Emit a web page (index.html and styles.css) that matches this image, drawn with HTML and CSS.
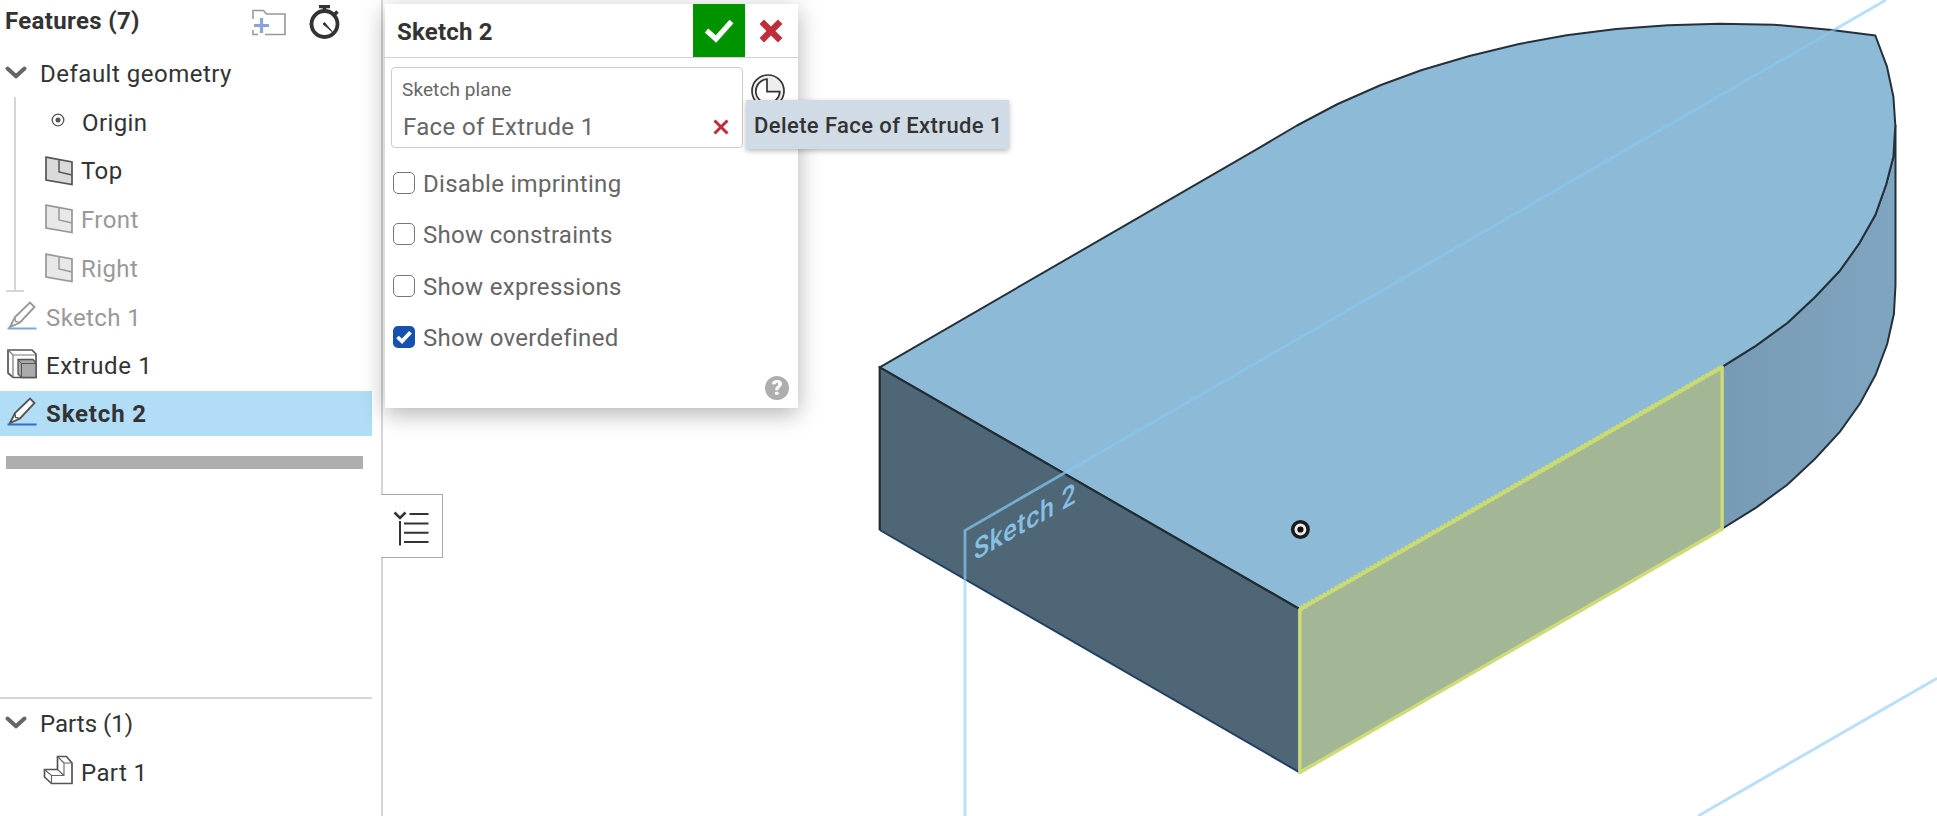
FILE: index.html
```html
<!DOCTYPE html>
<html lang="en">
<head>
<meta charset="utf-8">
<title>Sketch 2</title>
<link rel="stylesheet" href="styles.css">
</head>
<body>
<svg class="defs" width="0" height="0">
  <symbol id="plane" viewBox="0 0 28 30">
    <path d="M1 1.2 27 6v22.6L1 24Z" class="plane-fill"/>
    <path d="M14 3.600V16l13 3" class="plane-line"/>
  </symbol>
  <symbol id="pencil" viewBox="0 0 30 29">
    <path d="M3 26 8 16 23 1.500 27.500 6 13 21.500Z" class="pencil-body"/>
    <path d="M8 16.500 8.500 20.500 13 21.300" class="pencil-line"/>
    <path d="M0.500 27.500H29.500" class="pencil-base"/>
  </symbol>
  <symbol id="chevron" viewBox="0 0 22 14">
    <path d="M2.500 2.500 11 10.300 19.500 2.500" class="chevron-line"/>
  </symbol>
</svg>
<div class="app">
  <aside class="sidebar">
    <header class="side-head">
      <h1 class="title">Features (7)</h1>
      <svg class="folder" width="34" height="28" viewBox="0 0 34 28">
        <path d="M1 10V1.500H11.500L14.500 5H33V25.500H13M6 25.500H1V21" fill="none" stroke="#999" stroke-width="1.600"/>
        <path d="M9.500 9V24M2 16.500H17" stroke="#87a5dc" stroke-width="3.200"/>
      </svg>
      <svg class="timer" width="32" height="36" viewBox="0 0 32 36">
        <circle cx="15.500" cy="19" r="13" fill="none" stroke="#333" stroke-width="3.800"/>
        <path d="M10 1.500H21M15.500 1V6M25 10 28.500 6.500" fill="none" stroke="#333" stroke-width="3.600"/>
        <path d="M14 19 15.500 17.500 23 26.500Z" fill="#333" stroke="#333"/>
      </svg>
    </header>
    <div class="row group"><svg class="chev" width="22" height="14"><use href="#chevron"/></svg><span class="t geo">Default geometry</span></div>
    <div class="children">
      <div class="row child"><svg class="origin" width="14" height="14" viewBox="0 0 14 14"><circle cx="7" cy="7" r="5.800" fill="none" stroke="#555" stroke-width="1.300"/><circle cx="7" cy="7" r="2.500" fill="#555"/></svg><span class="t">Origin</span></div>
      <div class="row child"><svg class="ico" width="28" height="30"><use href="#plane"/></svg><span class="t">Top</span></div>
      <div class="row child dim"><svg class="ico" width="28" height="30"><use href="#plane"/></svg><span class="t">Front</span></div>
      <div class="row child dim"><svg class="ico" width="28" height="30"><use href="#plane"/></svg><span class="t">Right</span></div>
    </div>
    <div class="row item dim"><svg class="pencil" width="30" height="29"><use href="#pencil"/></svg><span class="t">Sketch 1</span></div>
    <div class="row item">
      <svg class="pencil" width="30" height="30" viewBox="0 0 30 30">
        <path d="M1 1H25L29 5V28.500H6L1 24Z" fill="#fff" stroke="#555" stroke-width="1.700"/>
        <path d="M1 1 6 6H29M6 6V28.500" fill="none" stroke="#777" stroke-width="1.200"/>
        <path d="M11 10.500H26L29 14V28.500H14.500L11 25Z" fill="#aaa" stroke="#555" stroke-width="1.300"/>
        <path d="M11 10.500 14.500 14.500H29M14.500 14.500V28" fill="none" stroke="#555"/>
      </svg><span class="t wide">Extrude 1</span></div>
    <div class="row item selected"><svg class="pencil" width="30" height="29"><use href="#pencil"/></svg><span class="t">Sketch 2</span></div>
    <div class="rollback"></div>
    <section class="parts">
      <div class="row group"><svg class="chev" width="22" height="14"><use href="#chevron"/></svg><span class="t tight">Parts (1)</span></div>
      <div class="row child">
        <svg class="ico part" width="30" height="30" viewBox="0 0 30 30">
          <path d="M1.500 14.500H14.500V1.500H23.500L29 8V28.500H8.500L1.500 22Z" fill="#fff" stroke="#555" stroke-width="1.700"/>
          <path d="M1.500 14.500 8.500 20.500H21V8H29M14.500 1.500 21 8M14.500 14.500 21 20.500M8.500 20.500V28" fill="none" stroke="#666" stroke-width="1.100"/>
        </svg><span class="t">Part 1</span></div>
    </section>
  </aside>
  <main class="canvas">
    <svg class="model" width="1554" height="816" viewBox="383 0 1554 816">
      <defs>
        <linearGradient id="side" x1="1722" x2="1896" y1="0" y2="0" gradientUnits="userSpaceOnUse">
          <stop offset="0" stop-color="#779bb5"/><stop offset=".5" stop-color="#7ca0ba"/><stop offset="1" stop-color="#7fa5c0"/>
        </linearGradient>
      </defs>
      <path fill="url(#side)" stroke="#25313a" stroke-width="2" d="M1722.500 366.700 1756.500 345.300 1787.600 322.700 1815.300 296.700 1839.900 270.700 1859.300 243.300 1875.300 215 1886 185 1893.400 156.700 1895.500 125V285L1893.900 314 1887.200 344 1875.500 375 1860 403.500 1840 431.700 1815.300 458.500 1787.600 484.500 1756.500 507.300 1722.500 528.500Z"/>
      <path fill="#8dbad6" stroke="#25313a" stroke-width="2" stroke-linejoin="round" d="M879.700 367.300 1260 147.300 1297 125.500 1337.700 104 1380.900 85 1421.900 70 1469.400 56 1519 44 1566.600 35.300 1616.200 29 1668 25.300 1719.800 23.700 1773.800 24.700 1832 30 1875.300 35.500 1887 66.700 1893.400 96.700 1895.300 125 1893.400 156.700 1886 185 1875.300 215 1859.300 243.300 1839.900 270.700 1815.300 296.700 1787.600 322.700 1756.500 345.300 1722.500 366.700 1299.500 609Z"/>
      <path fill="#4e6676" d="M879.700 367.300 1299.500 609V772.300L879.700 530Z"/>
      <path fill="none" stroke="#1f3f63" stroke-width="2" d="M879.700 530 1299.500 772.300"/>
      <path fill="none" stroke="#222c33" stroke-width="2.200" d="M1299.500 609 879.700 367.300V530"/>
      <path fill="#a3b796" stroke="#cddc76" stroke-width="3.400" stroke-linejoin="round" d="M1299.800 609.500 1722.200 367V529L1299.800 772.500Z"/>
      <path fill="none" stroke="#c9da72" stroke-width="5" stroke-dasharray="3 1.500" d="M1300 609 1722 367"/>
      <path fill="none" stroke="#86c9f3" stroke-opacity=".58" stroke-width="3" d="M965 816V530.500L1065 472.700 1260 360.700 1886 0M1698 816 1937 678.300"/>
      <path fill="none" stroke="#78b3d6" stroke-opacity=".75" stroke-width="2" d="M965 579V530.500L1065 472.700"/>
      <text class="plane-label" transform="matrix(.866 -.5 0 1 974 561)">Sketch 2</text>
      <circle cx="1300.400" cy="529.500" r="7.700" fill="#eee" stroke="#1c1c1c" stroke-width="3.600"/>
      <circle cx="1300.400" cy="529.500" r="3.100" fill="#111"/>
    </svg>

    <section class="dialog">
      <header class="dialog-head">
        <h2 class="dialog-title">Sketch 2</h2>
        <span class="accept"><svg width="30" height="24" viewBox="0 0 30 24"><path d="M2.500 11.500 12 20 27.500 2.500" fill="none" stroke="#fff" stroke-width="5.200"/></svg></span>
        <span class="cancel"><svg width="24" height="24" viewBox="0 0 24 24"><path d="M2.800 2.800 21.200 21.200M21.200 2.800 2.800 21.200" stroke="#bf2d38" stroke-width="6.200"/></svg></span>
      </header>
      <div class="field-row">
        <div class="field">
          <span class="field-label">Sketch plane</span>
          <div class="field-value"><span class="face">Face of Extrude 1</span><svg width="16" height="16" viewBox="0 0 16 16"><path d="M1.500 1.500 14.500 14.500M14.500 1.500 1.500 14.500" stroke="#bf2d38" stroke-width="3"/></svg></div>
        </div>
        <svg class="clock" width="36" height="36" viewBox="0 0 36 36">
          <circle cx="18" cy="18" r="16" fill="#eee" stroke="#333" stroke-width="1.700"/>
          <path d="M17 6.200A12 12 0 1 0 29.800 18.700H17Z" fill="#fff" stroke="#333" stroke-width="1.700"/>
        </svg>
      </div>
      <div class="options">
        <label class="opt"><i class="box"></i><span>Disable imprinting</span></label>
        <label class="opt"><i class="box"></i><span>Show constraints</span></label>
        <label class="opt"><i class="box"></i><span>Show expressions</span></label>
        <label class="opt"><i class="box on"><svg width="22" height="22" viewBox="0 0 22 22"><path d="M4.500 11 9 15.300 17.500 6.300" fill="none" stroke="#fff" stroke-width="3.800"/></svg></i><span>Show overdefined</span></label>
      </div>
      <span class="help">?</span>
    </section>
    <div class="tooltip">Delete Face of Extrude 1</div>
    <div class="list-tab">
      <svg width="36" height="36" viewBox="0 0 36 36" fill="none" stroke="#333" stroke-width="2">
        <path d="M1.500 1.500 7 7 12.500 1.500" stroke-width="2.500"/>
        <path d="M16.500 3H35.500M11 12.500H35.500M11 21.800H35.500M11 31H35.500M7 10V34.500"/>
      </svg>
    </div>
  </main>
</div>
</body>
</html>
```
FILE: styles.css
```css
* { box-sizing: border-box; }
body { margin: 0; background: #fff; font-family: Roboto, "Liberation Sans", sans-serif; font-size: 24px; color: #333; overflow: hidden; }
svg { display: block; flex: none; }
.defs { position: absolute; }
.app { display: flex; width: 1937px; height: 816px; }

.sidebar { width: 383px; flex: none; border-right: 2px solid #d6d6d6; display: flex; flex-direction: column; }
.side-head { display: flex; align-items: flex-start; height: 49px; padding: 5px 0 0 5px; }
.title { margin: 2px 0 0; width: 247px; font-size: 24px; line-height: 28px; font-weight: 700; letter-spacing: .35px; }
.folder { margin-top: 4px; }
.timer { margin-left: 23px; }
.row { height: 48.700px; display: flex; align-items: center; white-space: nowrap; flex: none; }
.t { padding-top: 1px; line-height: 28px; letter-spacing: .4px; }
.wide { letter-spacing: .65px; }
.tight { letter-spacing: 0; }
.group { padding-left: 5px; }
.group .t { margin-left: 13px; }
.geo { letter-spacing: .5px; }
.children { position: relative; height: 195px; flex: none; }
.children::before { content: ""; position: absolute; left: 14px; top: -1px; height: 194px; width: 2px; background: #d6d6d6; }
.children::after { content: ""; position: absolute; left: 6px; top: 192px; width: 18px; height: 2px; background: #d6d6d6; }
.child { padding-left: 45px; }
.child .t { margin-left: 8px; }
.origin { margin: -5px 9px 0 6px; }
.part { margin: -4px 0 0 -2px; }
.item { padding-left: 7px; width: 372px; }
.item .t { margin-left: 9px; }
.pencil { margin-top: -4px; }
.dim { color: #999; }
.dim svg { opacity: .6; }
.selected { height: 45px; margin-top: 1px; background: #b1ddf6; font-weight: 700; }
.selected .t { letter-spacing: .85px; }
.rollback { margin: 20px 0 0 6px; width: 357px; height: 13px; background: #aeaeae; flex: none; }
.parts { margin-top: 228px; width: 372px; border-top: 2px solid #d6d6d6; }
.plane-fill { fill: #dadada; stroke: #555; stroke-width: 1.700; }
.plane-line { fill: none; stroke: #555; stroke-width: 1.500; }
.pencil-body { fill: #fff; stroke: #555; stroke-width: 1.900; }
.pencil-line { fill: none; stroke: #555; stroke-width: 1.300; }
.pencil-base { stroke: #2f6bd0; stroke-width: 2; }
.chevron-line { fill: none; stroke: #666; stroke-width: 4; stroke-linecap: round; stroke-linejoin: round; }

.canvas { position: relative; flex: 1; }
.plane-label { font-size: 29px; font-weight: 500; letter-spacing: .7px; fill: #86c0e3; }

.dialog { position: absolute; left: 2px; top: 4px; width: 413px; height: 404px; background: #fff; color: #666; box-shadow: 0 6px 22px rgba(0,0,0,.3); }
.dialog-head { display: flex; height: 54px; border-bottom: 1px solid #d2d2d2; }
.dialog-title { flex: 1; margin: 0; padding: 14px 0 0 12px; font-size: 24px; line-height: 28px; font-weight: 700; letter-spacing: .2px; color: #333; }
.accept, .cancel { width: 52px; display: flex; align-items: center; justify-content: center; }
.accept { background: #009300; }
.cancel { width: 53px; padding-right: 1px; }
.field-row { display: flex; padding: 9px 0 0 6px; }
.field { width: 352px; height: 81px; border: 1px solid #ccc; border-radius: 4px; padding: 11px 0 0 10px; }
.field-label { display: block; font-size: 19px; line-height: 22px; letter-spacing: .1px; }
.field-value { display: flex; align-items: center; justify-content: space-between; padding: 11px 13px 0 1px; line-height: 28px; }
.face { padding-top: 1px; letter-spacing: .35px; }
.clock { margin: 6px 0 0 7px; }
.options { display: flex; flex-direction: column; gap: 29.300px; padding: 24px 0 0 8px; }
.opt { display: flex; align-items: center; height: 22px; letter-spacing: .3px; white-space: nowrap; }
.opt span { margin-left: 8px; padding-top: 2px; line-height: 28px; }
.box { width: 22px; height: 22px; border: 1px solid #777; border-radius: 5px; }
.box.on { border: 0; background: #1650b0; }
.help { position: absolute; right: 9px; bottom: 8px; width: 24px; height: 24px; border-radius: 50%; background: #aeaeae; color: #fff; font-size: 21px; line-height: 24px; font-weight: 900; text-align: center; }
.tooltip { position: absolute; left: 363px; top: 100px; width: 263px; height: 49px; padding-left: 8px; background: #d1dbe5; color: #333; font-size: 22px; line-height: 51px; font-weight: 500; letter-spacing: .4px; white-space: nowrap; box-shadow: 0 2px 5px rgba(0,0,0,.28); }
.list-tab { position: absolute; left: -2px; top: 494px; width: 62px; height: 64px; background: #fff; border: 1px solid #aaa; border-left: 0; padding: 16px 0 0 12px; }
```
